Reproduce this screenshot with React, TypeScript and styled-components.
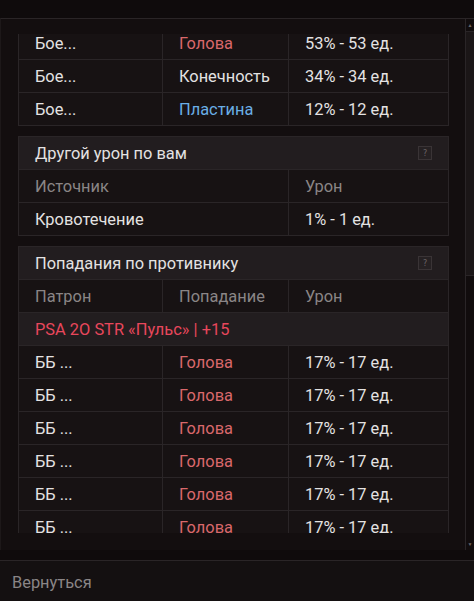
import React, { useLayoutEffect, useRef } from 'react';
import styled, { createGlobalStyle } from 'styled-components';

/*
 * Palette.
 */

const palette = {
  page: '#0f0b0c',
  panel: '#130e0f',
  cell: '#171213',
  header: '#221d1f',
  border: '#2a2527',
  text: '#e4e2e2',
  muted: '#8a8586',
  red: '#d9686b',
  group: '#e8475c',
  blue: '#6aaee6',
};

const fontSize = '16.4px';

/*
 * Styles.
 */

const GlobalStyle = createGlobalStyle`
  html, body {
    margin: 0;
    padding: 0;
    background: ${palette.page};
  }

  body {
    font-family: Roboto, "Liberation Sans", sans-serif;
    color: ${palette.text};
  }
`;

const Screen = styled.div`
  width: 474px;
  height: 601px;
  display: flex;
  flex-direction: column;
  background: ${palette.page};
  overflow: hidden;
`;

const TopBar = styled.div`
  height: 18px;
  flex: none;
`;

const Panel = styled.div`
  height: 532px;
  flex: none;
  display: flex;
  background: ${palette.panel};
  border-top: 1px solid ${palette.border};
  border-left: 1px solid #1d1819;
  box-sizing: border-box;
`;

const ContentArea = styled.div`
  flex: 1;
  padding: 15px 16px 16px 17px;
  display: flex;
  flex-direction: column;
`;

const Viewport = styled.div`
  height: 499px;
  overflow: hidden;
  display: flex;
  flex-direction: column;
  gap: 10px;
`;

const ScrollTrack = styled.div`
  width: 8px;
  flex: none;
  border-left: 1px solid ${palette.border};
  display: flex;
  flex-direction: column;
  background: #110c0d;
`;

const ScrollArrow = styled.div`
  height: 12px;
  flex: none;
  display: flex;
  align-items: center;
  justify-content: center;
  color: #6d6869;
  font-size: 5px;
  line-height: 1;
`;

const ScrollThumb = styled.div`
  height: 243px;
  flex: none;
  background: #1b1617;
  border-top: 1px solid ${palette.border};
  border-bottom: 1px solid ${palette.border};
`;

const ScrollRest = styled.div`
  flex: 1;
`;

const Table = styled.div`
  border: 1px solid ${palette.border};
  background: ${palette.cell};
  flex: none;
`;

const TableHeader = styled.div`
  height: 32px;
  display: flex;
  align-items: center;
  justify-content: space-between;
  padding: 0 16px;
  background: ${palette.header};
  border-bottom: 1px solid ${palette.border};
  font-size: ${fontSize};
  color: ${palette.text};
`;

const HelpIcon = styled.div`
  width: 12px;
  height: 12px;
  border: 1px solid #3a3436;
  background: #262123;
  color: #6b6566;
  font-size: 8px;
  font-family: "DejaVu Sans", sans-serif;
  display: flex;
  align-items: center;
  justify-content: center;
`;

const Row = styled.div<{ $columns: string }>`
  height: 32px;
  display: grid;
  grid-template-columns: ${({ $columns }) => $columns};
  border-bottom: 1px solid ${palette.border};

  &:last-child {
    border-bottom: none;
  }
`;

const Cell = styled.div<{ $tone?: 'muted' | 'red' | 'blue' }>`
  display: flex;
  align-items: center;
  padding-left: 16px;
  border-right: 1px solid ${palette.border};
  font-size: ${fontSize};
  white-space: nowrap;
  color: ${({ $tone }) =>
    $tone === 'muted' ? palette.muted : $tone === 'red' ? palette.red : $tone === 'blue' ? palette.blue : palette.text};

  &:last-child {
    border-right: none;
  }
`;

const GroupRow = styled.div`
  height: 32px;
  display: flex;
  align-items: center;
  padding-left: 16px;
  background: ${palette.header};
  border-bottom: 1px solid ${palette.border};
  color: ${palette.group};
  font-size: ${fontSize};
`;

const Gap = styled.div`
  height: 10px;
  flex: none;
  border-bottom: 1px solid ${palette.border};
  background: ${palette.page};
`;

const Footer = styled.div`
  flex: 1;
  display: flex;
  align-items: center;
  padding: 3px 0 0 12px;
  background: #141011;
  color: ${palette.muted};
  font-size: ${fontSize};
`;

/*
 * Data.
 */

const threeCols = '144px 126px 1fr';
const twoCols = '270px 1fr';

type Hit = { name: string; part: string; tone?: 'red' | 'blue'; damage: string };

const hitsOnYou: Hit[] = [
  { name: 'Бое...', part: 'Голова', tone: 'red', damage: '53% - 53 ед.' },
  { name: 'Бое...', part: 'Конечность', damage: '34% - 34 ед.' },
  { name: 'Бое...', part: 'Пластина', tone: 'blue', damage: '12% - 12 ед.' },
];

const hitsOnEnemy: Hit[] = Array.from({ length: 6 }, () => ({
  name: 'ББ ...',
  part: 'Голова',
  tone: 'red' as const,
  damage: '17% - 17 ед.',
}));

/*
 * App component.
 */

function HitRows({ hits }: { hits: Hit[] }) {
  return (
    <>
      {hits.map((hit, index) => (
        <Row $columns={threeCols} key={index}>
          <Cell>{hit.name}</Cell>
          <Cell $tone={hit.tone}>{hit.part}</Cell>
          <Cell>{hit.damage}</Cell>
        </Row>
      ))}
    </>
  );
}

export default function App() {
  const viewportRef = useRef<HTMLDivElement>(null);
  const firstRowRef = useRef<HTMLDivElement>(null);

  useLayoutEffect(() => {
    const viewport = viewportRef.current;
    const marker = firstRowRef.current;
    if (!viewport || !marker) return;
    const offset = marker.getBoundingClientRect().top - viewport.getBoundingClientRect().top;
    viewport.scrollTop = offset + 7;
  }, []);

  return (
    <Screen>
      <GlobalStyle />
      <TopBar />
      <Panel>
        <ContentArea>
          <Viewport ref={viewportRef}>
            <Table>
              <TableHeader>
                Попадания по вам
                <HelpIcon>?</HelpIcon>
              </TableHeader>
              <Row $columns={threeCols}>
                <Cell $tone="muted">Оружие</Cell>
                <Cell $tone="muted">Попадание</Cell>
                <Cell $tone="muted">Урон</Cell>
              </Row>
              <div ref={firstRowRef} />
              <HitRows hits={hitsOnYou} />
            </Table>

            <Table>
              <TableHeader>
                Другой урон по вам
                <HelpIcon>?</HelpIcon>
              </TableHeader>
              <Row $columns={twoCols}>
                <Cell $tone="muted">Источник</Cell>
                <Cell $tone="muted">Урон</Cell>
              </Row>
              <Row $columns={twoCols}>
                <Cell>Кровотечение</Cell>
                <Cell>1% - 1 ед.</Cell>
              </Row>
            </Table>

            <Table>
              <TableHeader>
                Попадания по противнику
                <HelpIcon>?</HelpIcon>
              </TableHeader>
              <Row $columns={threeCols}>
                <Cell $tone="muted">Патрон</Cell>
                <Cell $tone="muted">Попадание</Cell>
                <Cell $tone="muted">Урон</Cell>
              </Row>
              <GroupRow>PSA 2O STR «Пульс» | +15</GroupRow>
              <HitRows hits={hitsOnEnemy} />
            </Table>
          </Viewport>
        </ContentArea>
        <ScrollTrack>
          <ScrollArrow>▲</ScrollArrow>
          <ScrollThumb />
          <ScrollRest />
          <ScrollArrow>▼</ScrollArrow>
        </ScrollTrack>
      </Panel>
      <Gap />
      <Footer>Вернуться</Footer>
    </Screen>
  );
}
